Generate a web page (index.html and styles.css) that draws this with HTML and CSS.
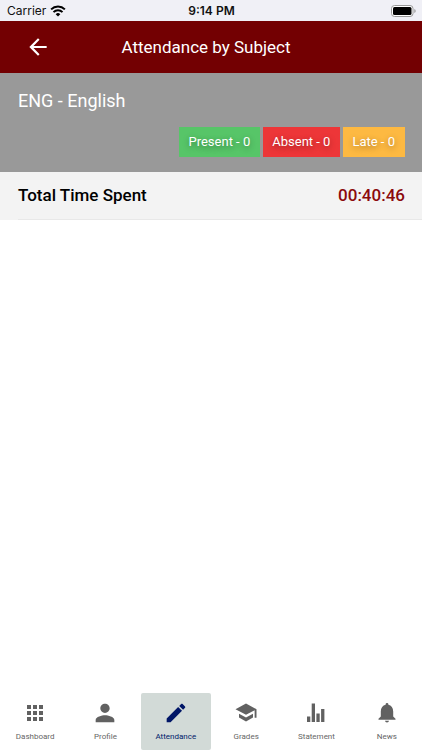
FILE: index.html
```
<!DOCTYPE html>
<html lang="en">
<head>
  <meta charset="utf-8">
  <meta name="viewport" content="width=device-width, initial-scale=1">
  <title>Attendance by Subject</title>
  <link rel="stylesheet" href="styles.css">
</head>
<body>
  <!-- Status bar -->
  <div class="status-bar">
    <div class="carrier">
      <span>Carrier</span>
      <svg width="16" height="12" viewBox="0 0 16 12">
        <path d="M8 11.5L5.7 9.2a3.3 3.3 0 0 1 4.6 0z" fill="#000"/>
        <path d="M3.5 7.1a6.4 6.4 0 0 1 9 0M1.1 4.4a9.9 9.9 0 0 1 13.8 0" fill="none" stroke="#000" stroke-width="2"/>
      </svg>
    </div>
    <div class="clock">9:14 PM</div>
    <div class="battery">
      <svg width="25" height="12" viewBox="0 0 25 12">
        <rect x="0.5" y="0.5" width="21.5" height="11" rx="3" fill="#fff" stroke="#999"/>
        <rect x="2" y="2" width="18.5" height="8" rx="1.5" fill="#000"/>
        <path d="M23.3 4v4q1.4-.6 1.4-2t-1.4-2z" fill="#999"/>
      </svg>
    </div>
  </div>

  <!-- Header -->
  <header class="toolbar">
    <button class="back" aria-label="Back">
      <svg width="26" height="26" viewBox="0 0 24 24" fill="#fff"><path d="M20 11H7.83l5.59-5.59L12 4l-8 8 8 8 1.41-1.41L7.83 13H20z"/></svg>
    </button>
    <h1>Attendance by Subject</h1>
  </header>

  <!-- Subject -->
  <main>
    <section class="subject">
      <h2>ENG - English</h2>
      <div class="badges">
        <span class="badge present">Present - 0</span>
        <span class="badge absent">Absent - 0</span>
        <span class="badge late">Late - 0</span>
      </div>
    </section>
    <div class="total">
      <div class="total-inner">
        <span>Total Time Spent</span>
        <span class="time">00:40:46</span>
      </div>
    </div>
  </main>

  <!-- Tabs -->
  <nav class="tabs">
    <a href="#dashboard">
      <svg viewBox="0 0 28 28"><path d="M6 6h4v4H6zM12 6h4v4h-4zM18 6h4v4h-4zM6 12h4v4H6zM12 12h4v4h-4zM18 12h4v4h-4zM6 18h4v4H6zM12 18h4v4h-4zM18 18h4v4h-4z"/></svg>
      <span>Dashboard</span>
    </a>
    <a href="#profile">
      <svg viewBox="0 0 24 24"><path d="M12 12c2.21 0 4-1.79 4-4s-1.79-4-4-4-4 1.79-4 4 1.79 4 4 4zm0 2c-2.67 0-8 1.34-8 4v2h16v-2c0-2.66-5.33-4-8-4z"/></svg>
      <span>Profile</span>
    </a>
    <a href="#attendance" class="active">
      <svg viewBox="0 0 24 24"><path d="M4 16.67V20h3.33l9.83-9.83-3.33-3.33L4 16.67zM19.74 7.59c.35-.35.35-.91 0-1.25L17.66 4.26c-.34-.35-.9-.35-1.25 0l-1.65 1.65 3.33 3.33 1.65-1.65z"/></svg>
      <span>Attendance</span>
    </a>
    <a href="#grades">
      <svg viewBox="0 0 24 24"><path d="M6 12.6v3.3l6 3.3 6-3.3v-3.3l-6 3.3-6-3.3zM12 3.8L3 8.7l9 4.9 7.4-4V16H21V8.7l-9-4.9z"/></svg>
      <span>Grades</span>
    </a>
    <a href="#statement">
      <svg viewBox="0 0 28 28"><path d="M5 17.5h3.3V23H5zM9.7 4.5H13V23H9.7zM14.4 14.5h3.3V23h-3.3zM19.1 10h3.3v13h-3.3z"/></svg>
      <span>Statement</span>
    </a>
    <a href="#news">
      <svg viewBox="0 0 28 28"><path d="M14 23.5a2 2 0 0 0 2-1.8h-4a2 2 0 0 0 2 1.8zM20.2 17.6v-5.2c0-3.4-1.9-5.9-4.8-6.6v-.4a1.4 1.4 0 0 0-2.8 0v.4c-2.9.7-4.8 3.2-4.8 6.6v5.2l-2.3 2.2v1h17v-1z"/></svg>
      <span>News</span>
    </a>
  </nav>
</body>
</html>
```

FILE: styles.css
```
* {
  box-sizing: border-box;
}
body {
  margin: 0;
  min-height: 100vh;
  display: flex;
  flex-direction: column;
  background: #fff;
  font-family: Roboto, sans-serif;
}
h1, h2 {
  margin: 0;
  font-weight: 400;
}

/* Status bar */
.status-bar {
  display: grid;
  grid-template-columns: 1fr auto 1fr;
  align-items: center;
  height: 21px;
  padding: 0 6px 0 7px;
  background: #f0f0f6;
  color: #111;
  font-family: Inter, sans-serif;
  font-size: 12px;
}
.carrier {
  display: flex;
  align-items: center;
  gap: 4px;
}
.clock {
  font-weight: 600;
}
.battery {
  display: flex;
  justify-content: flex-end;
}

/* Header */
.toolbar {
  display: grid;
  grid-template-columns: 76px 1fr 86px;
  align-items: center;
  height: 52px;
  background: #730002;
  color: #fff;
}
.back {
  display: flex;
  justify-content: center;
  padding: 0;
  border: 0;
  background: none;
}
.toolbar h1 {
  font-size: 17px;
  text-align: center;
}

/* Subject */
main {
  flex: 1;
}
.subject {
  padding: 16px 17px 15px 18px;
  background: #999;
  color: #fff;
}
.subject h2 {
  font-size: 18px;
  line-height: 24px;
}
.badges {
  display: flex;
  justify-content: flex-end;
  gap: 3px;
  margin-top: 14px;
}
.badge {
  padding: 0 10px 0 9px;
  font-size: 13px;
  line-height: 30px;
  text-shadow: 0 2px 6px rgba(0, 0, 0, 0.4);
}
.present {
  background: #57c568;
}
.absent {
  background: #ed3638;
}
.late {
  background: #fdb942;
}
.total {
  padding-left: 18px;
  background: #f3f3f3;
}
.total-inner {
  display: flex;
  justify-content: space-between;
  padding-right: 17px;
  border-bottom: 1px solid #e8e8e8;
  color: #000;
  font-size: 17px;
  font-weight: 500;
  line-height: 47px;
}
.time {
  color: #8b0a0c;
}

/* Tabs */
.tabs {
  display: flex;
}
.tabs a {
  flex: 1;
  display: flex;
  flex-direction: column;
  align-items: center;
  gap: 5px;
  height: 57px;
  padding-top: 6px;
  border-radius: 2px;
  color: #666;
  font-size: 8px;
  line-height: 10px;
  text-decoration: none;
}
.tabs svg {
  width: 28px;
  height: 28px;
  fill: #616161;
}
.tabs .active {
  background: #d2dad7;
  color: #001b6b;
}
.tabs .active svg {
  fill: #001667;
}
```
